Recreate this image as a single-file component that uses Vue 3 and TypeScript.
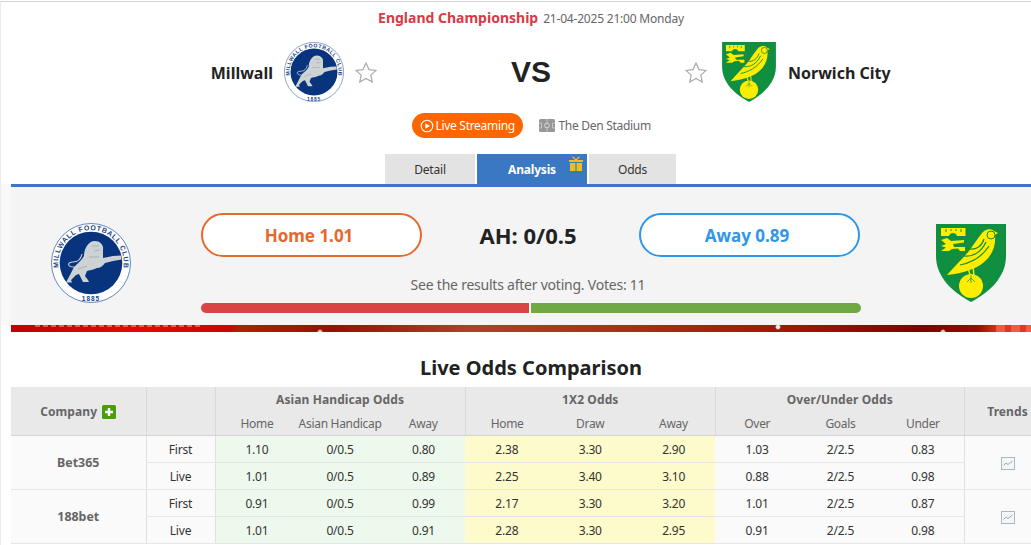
<template>
  <div class="page">
    <div class="content">
      <div class="title-line">
        <span class="league">England Championship</span>
        <span class="date">21-04-2025 21:00 Monday</span>
      </div>

      <div class="teams">
        <div class="team team-home">
          <span class="team-name">Millwall</span>
          <svg class="logo-small" viewBox="-40 -40 80 80">
            <g id="millwall">
              <circle r="39.5" fill="#fff" stroke="#3f6aa8" stroke-width="0.8" />
              <circle r="31.3" fill="#07347c" />
              <path id="arc-top" d="M-32.3,5 A32.7,32.7 0 1 1 32.3,5" fill="none" />
              <text class="crest-text"><textPath href="#arc-top" startOffset="50%" text-anchor="middle" textLength="112">MILLWALL FOOTBALL CLUB</textPath></text>
              <text class="crest-year" x="0" y="38" text-anchor="middle">1885</text>
              <path
                fill="#cdd3d5"
                d="M4,-22 C9,-22 13,-18 12,-13 C12,-9 12,-7 12,-5 L22,-7 L30,-7.5 L30.5,-3.5 L22,-2 L14,0 C12,3 9,5 6,5 C2,7 -2,7 -4,8 L-6,13 L-3,17 L-2,19 L-8,19 L-12,11 L-15,12 L-20,17 L-19,19.5 L-25,19.5 L-21,12 L-17,4 C-13,0 -9,-3 -7,-7 C-7,-14 -3,-22 4,-22 Z"
              />
              <path d="M-17,4 C-24,4 -24,-1 -18,-1 C-13,-1 -10,-4 -9,-9" fill="none" stroke="#cdd3d5" stroke-width="1.1" />
              <path d="M1,-17 L8,-17 M3,-12 L9,-13 M-2,-6 L8,-6 M-13,6 L-4,3" stroke="#98a3a9" stroke-width="0.7" fill="none" />
            </g>
          </svg>
          <svg class="star" viewBox="0 0 22 21"><polygon points="11,1 14,7.6 21,8.4 15.8,13.1 17.3,20 11,16.4 4.7,20 6.2,13.1 1,8.4 8,7.6" /></svg>
        </div>
        <div class="vs">VS</div>
        <div class="team team-away">
          <svg class="star" viewBox="0 0 22 21"><polygon points="11,1 14,7.6 21,8.4 15.8,13.1 17.3,20 11,16.4 4.7,20 6.2,13.1 1,8.4 8,7.6" /></svg>
          <svg class="logo-norwich-small" viewBox="0 0 70 78">
            <g id="norwich">
              <path fill="#0f8f3f" d="M0,0 H70 V32 C70,54 52,69 35,78 C18,69 0,54 0,32 Z" />
              <path fill="#ffed00" d="M5,4 H29.5 V12 H21 C20,8 14,8 13,12 H5 Z" />
              <path stroke="#0f8f3f" stroke-width="1" d="M10,5 V8 M15,5 V7 M20,5 V7 M25,5 V8" />
              <path fill="#ffed00" d="M5,16 L11,14 L15,17 L28,16 V18.5 L17,20 L18,23 L29,23 V27 H24 L22,24.5 L16,25 L13,27 H5 L10,23.5 L5,22 L10,20 Z" />
              <circle cx="35" cy="62" r="12" fill="#ffed00" />
              <path fill="#ffed00" d="M11,51 C20,41 27,34 33,27 C38,20 42,14 46,9 C49,5 55,4 58,7 L62,9 L59,11 C60,21 57,31 47,39 C39,45 28,49 11,51 Z" />
              <circle cx="55" cy="11" r="4" fill="none" stroke="#0f8f3f" stroke-width="1" />
              <path fill="none" stroke="#0f8f3f" stroke-width="1.2" d="M24,41 C34,39 46,33 53,22 M28,32 C36,33 45,29 50,18 M34,25 C40,26 46,22 48,15" />
              <path fill="none" stroke="#ffed00" stroke-width="1.4" d="M32,44 L35,54 M37,42 L38,52" />
              <path fill="none" stroke="#0f8f3f" stroke-width="0.7" d="M35,51 L35,59 M35,54 L31,58 M35,54 L39,58" />
            </g>
          </svg>
          <span class="team-name">Norwich City</span>
        </div>
      </div>

      <div class="info-row">
        <span class="live-btn">
          <svg class="play" viewBox="0 0 14 14">
            <circle cx="7" cy="7" r="5.8" fill="none" stroke="#fff" stroke-width="1.1" />
            <polygon points="5.4,4.2 10,7 5.4,9.8" fill="#fff" />
          </svg>
          Live Streaming
        </span>
        <span class="venue">
          <svg class="pitch" viewBox="0 0 16 13">
            <rect width="16" height="13" rx="1.5" fill="#979797" />
            <path d="M8,0 V13 M0,4 H2.5 V9 H0 M16,4 H13.5 V9 H16" fill="none" stroke="#d8d8d8" stroke-width="0.7" />
            <circle cx="8" cy="6.5" r="2.4" fill="#979797" stroke="#e8e8e8" stroke-width="0.8" />
          </svg>
          The Den Stadium
        </span>
      </div>

      <div class="tabs">
        <div class="tab tab-detail">Detail</div>
        <div class="tab tab-analysis">
          Analysis
          <svg class="gift" viewBox="0 0 14 15">
            <path fill="#f5b921" d="M1,7 H6.4 V15 H1 Z M7.6,7 H13 V15 H7.6 Z M0,4 H14 V6 H0 Z" />
            <path fill="none" stroke="#f5b921" stroke-width="1.2" d="M7,4 L3.5,0.8 M7,4 L10.5,0.8" />
          </svg>
        </div>
        <div class="tab tab-odds">Odds</div>
      </div>

      <div class="vote-panel">
        <svg class="logo-large" viewBox="-40 -40 80 80"><use href="#millwall" /></svg>
        <div class="vote-center">
          <div class="vote-buttons">
            <div class="vote-btn home">Home 1.01</div>
            <div class="handicap">AH: 0/0.5</div>
            <div class="vote-btn away">Away 0.89</div>
          </div>
          <div class="vote-note">See the results after voting. Votes: 11</div>
          <div class="vote-bar">
            <span class="bar-home"></span>
            <span class="bar-away"></span>
          </div>
        </div>
        <svg class="logo-norwich-large" viewBox="0 0 70 78"><use href="#norwich" /></svg>
      </div>
      <div class="banner-strip"></div>

      <h2 class="section-title">Live Odds Comparison</h2>

      <table class="odds-table">
        <colgroup>
          <col class="c-company" />
          <col class="c-type" />
          <col v-for="n in 9" :key="n" class="c-odd" />
          <col class="c-trend" />
        </colgroup>
        <thead>
          <tr>
            <th rowspan="2" class="company-head">
              Company
              <svg class="plus" viewBox="0 0 14 14">
                <rect width="14" height="14" rx="1.5" fill="#4b9e0b" />
                <path d="M7,3 V11 M3,7 H11" stroke="#fff" stroke-width="2.4" />
              </svg>
            </th>
            <th rowspan="2" class="company-head"></th>
            <th colspan="3">Asian Handicap Odds</th>
            <th colspan="3">1X2 Odds</th>
            <th colspan="3">Over/Under Odds</th>
            <th rowspan="2" class="company-head">Trends</th>
          </tr>
          <tr class="sub-head">
            <template v-for="(label, i) in subHeads" :key="i">
              <td :class="{ 'group-end': i % 3 === 2 }">{{ label }}</td>
            </template>
          </tr>
        </thead>
        <tbody>
          <template v-for="c in companies" :key="c.name">
            <tr v-for="(row, r) in c.rows" :key="row.type">
              <td v-if="r === 0" rowspan="2" class="company">{{ c.name }}</td>
              <td class="type">{{ row.type }}</td>
              <td v-for="(v, i) in row.odds" :key="i" :class="cellClass(i)">{{ v }}</td>
              <td v-if="r === 0" rowspan="2" class="trend">
                <svg class="trend-icon" viewBox="0 0 14 13">
                  <rect x="0.5" y="0.5" width="13" height="12" fill="#f4f7fa" stroke="#a9b6c4" />
                  <path d="M2.5,8.5 L5,6 L7,7.5 L11.5,4" fill="none" stroke="#9aa7b5" />
                </svg>
              </td>
            </tr>
          </template>
        </tbody>
      </table>
    </div>
  </div>
</template>

<script setup lang="ts">
interface OddsRow {
  type: string
  odds: string[]
}

interface Company {
  name: string
  rows: OddsRow[]
}

const subHeads = ['Home', 'Asian Handicap', 'Away', 'Home', 'Draw', 'Away', 'Over', 'Goals', 'Under']

const companies: Company[] = [
  {
    name: 'Bet365',
    rows: [
      { type: 'First', odds: ['1.10', '0/0.5', '0.80', '2.38', '3.30', '2.90', '1.03', '2/2.5', '0.83'] },
      { type: 'Live', odds: ['1.01', '0/0.5', '0.89', '2.25', '3.40', '3.10', '0.88', '2/2.5', '0.98'] },
    ],
  },
  {
    name: '188bet',
    rows: [
      { type: 'First', odds: ['0.91', '0/0.5', '0.99', '2.17', '3.30', '3.20', '1.01', '2/2.5', '0.87'] },
      { type: 'Live', odds: ['1.01', '0/0.5', '0.91', '2.28', '3.30', '2.95', '0.91', '2/2.5', '0.98'] },
    ],
  },
]

function cellClass(i: number) {
  if (i < 3) return 'asian'
  if (i < 6) return 'euro'
  return 'over'
}
</script>

<style>
html,
body {
  margin: 0;
  background: #fff;
}
</style>

<style scoped>
.page {
  width: 1031px;
  height: 544px;
  overflow: hidden;
  box-sizing: border-box;
  border-top: 1px solid #d4d4d4;
  border-left: 1px solid #ececec;
  margin-top: 1px;
  font-family: "Noto Sans", "Liberation Sans", sans-serif;
  font-size: 12px;
  letter-spacing: -0.2px;
  color: #333;
}

.crest-text {
  font-family: "Liberation Sans", sans-serif;
  font-size: 7px;
  font-weight: 700;
  letter-spacing: 0;
  fill: #1c4488;
}

.crest-year {
  font-family: "Liberation Sans", sans-serif;
  font-size: 6.5px;
  font-weight: 700;
  letter-spacing: 1px;
  fill: #1c4488;
}

.content {
  width: 1040px;
  margin-left: 10px;
}

.title-line {
  height: 29px;
  padding-top: 6px;
  box-sizing: border-box;
  display: flex;
  justify-content: center;
  align-items: baseline;
  gap: 5px;
}

.league {
  font-size: 14px;
  font-weight: 700;
  letter-spacing: 0;
  color: #d93a45;
}

.date {
  font-size: 12px;
  color: #666;
}

.teams {
  display: grid;
  grid-template-columns: 366px 308px 366px;
  align-items: center;
  height: 68px;
  margin-top: 7px;
}

.team {
  display: flex;
  align-items: center;
}

.team-home {
  justify-content: flex-end;
}

.team-name {
  font-size: 16px;
  font-weight: 700;
  letter-spacing: 0;
  color: #222;
  margin-top: 2px;
}

.logo-small {
  width: 60px;
  height: 60px;
  margin: 0 11px;
}

.logo-norwich-small {
  width: 54px;
  height: 60px;
  margin: 0 12px 0 15px;
}

.star {
  width: 22px;
  height: 21px;
  margin-top: 1px;
}

.star polygon {
  fill: #fff;
  stroke: #a9a9ad;
  stroke-width: 1.2;
}

.vs {
  text-align: center;
  font-size: 30px;
  font-weight: 700;
  letter-spacing: 0;
  color: #222;
  font-family: "Liberation Sans", sans-serif;
}

.info-row {
  display: flex;
  justify-content: center;
  align-items: center;
  gap: 16px;
  margin-top: 7px;
  height: 25px;
}

.live-btn {
  display: flex;
  align-items: center;
  gap: 2px;
  width: 111px;
  height: 25px;
  box-sizing: border-box;
  padding-left: 8px;
  background: #ff6600;
  color: #fff;
  letter-spacing: -0.3px;
  border-radius: 13px;
}

.play {
  width: 14px;
  height: 14px;
}

.venue {
  display: flex;
  align-items: center;
  gap: 4px;
  width: 112px;
  white-space: nowrap;
  letter-spacing: -0.3px;
  color: #666;
}

.pitch {
  width: 16px;
  height: 13px;
  flex: none;
}

.tabs {
  display: flex;
  justify-content: center;
  gap: 2px;
  margin-top: 16px;
  height: 30px;
  padding-right: 1px;
}

.tab {
  display: flex;
  align-items: center;
  justify-content: center;
  background: #e3e3e3;
  color: #333;
  position: relative;
}

.tab-detail {
  width: 90px;
}

.tab-analysis {
  width: 110px;
  background: #3b78c4;
  color: #fff;
  font-weight: 700;
}

.tab-odds {
  width: 87px;
}

.gift {
  position: absolute;
  right: 4px;
  top: 2px;
  width: 14px;
  height: 15px;
}

.vote-panel {
  border-top: 3px solid #3b78c4;
  height: 138px;
  background: #f4f4f4;
  box-shadow: -11px 0 0 #f8f8f8;
  display: flex;
  align-items: flex-start;
}

.logo-large {
  width: 80px;
  height: 80px;
  margin: 36px 70px 0 40px;
}

.vote-center {
  width: 660px;
  padding-top: 26px;
}

.vote-buttons {
  display: flex;
  align-items: center;
  justify-content: space-between;
  padding-right: 1px;
}

.vote-btn {
  width: 221px;
  height: 44px;
  box-sizing: border-box;
  padding-right: 5px;
  border-radius: 22px;
  background: #fff;
  border: 2px solid;
  display: flex;
  align-items: center;
  justify-content: center;
  font-size: 17px;
  font-weight: 700;
  letter-spacing: 0;
}

.vote-btn.home {
  border-color: #e5682c;
  color: #e5682c;
}

.vote-btn.away {
  border-color: #2f97e8;
  color: #2f97e8;
}

.handicap {
  font-size: 22px;
  font-weight: 700;
  letter-spacing: 0;
  color: #222;
  margin-right: 5px;
}

.vote-note {
  text-align: center;
  font-size: 14px;
  letter-spacing: -0.23px;
  color: #666;
  margin-top: 18px;
  padding-right: 6px;
}

.vote-bar {
  display: flex;
  gap: 2px;
  margin-top: 9px;
  height: 10px;
}

.bar-home {
  width: 328px;
  background: #d94545;
  border-radius: 5px 0 0 5px;
}

.bar-away {
  flex: 1;
  background: #6fa944;
  border-radius: 0 5px 5px 0;
}

.logo-norwich-large {
  width: 70px;
  height: 78px;
  margin: 37px 0 0 75px;
}

.banner-strip {
  height: 7px;
  background:
    radial-gradient(circle at 309px 7px, #e8c8b8 0, #e8c8b8 1.5px, transparent 3px),
    radial-gradient(circle at 767px 2px, #f4eeea 0, #f4eeea 1.5px, transparent 3px),
    radial-gradient(circle at 932px 7px, #e8c8b8 0, #e8c8b8 1.5px, transparent 3px),
    repeating-linear-gradient(90deg, rgba(255, 215, 195, 0.4) 0 5px, transparent 5px 8px) 24px 0 / 168px 2px no-repeat,
    repeating-linear-gradient(90deg, rgba(255, 150, 120, 0.4) 0 9px, transparent 9px 15px) 985px 0 / 55px 7px no-repeat,
    linear-gradient(90deg, #b80505 0%, #e00a0a 12%, #c60707 21%, #aa2208 22%, #980f04 31%, #b0402a 44%, #a92e18 60%, #a01406 76%, #800000 88%, #9a0c04 93%, #e23420 95%, #ea3a1e 100%);
}

.section-title {
  margin: 0;
  height: 55px;
  padding-top: 22px;
  box-sizing: border-box;
  text-align: center;
  font-size: 20px;
  line-height: 27px;
  font-weight: 700;
  letter-spacing: 0;
  color: #222;
}

.odds-table {
  width: 1040px;
  table-layout: fixed;
  border-collapse: collapse;
  text-align: center;
  color: #333;
}

.c-company {
  width: 135px;
}

.c-type {
  width: 69px;
}

.c-odd {
  width: 83.4px;
}

.c-odd:nth-child(11) {
  width: 82px;
}

.c-trend {
  width: 86.8px;
}

.odds-table th,
.odds-table td {
  padding: 1px 0 0;
  height: 25px;
  line-height: 16px;
  white-space: nowrap;
  border-bottom: 1px solid #e6e6e6;
}

.odds-table thead th,
.odds-table thead td {
  background: #e9e9e9;
  color: #666;
  border-bottom: 0;
  border-right: 1px solid #d9d9d9;
  height: 23px;
}

.odds-table thead th {
  font-size: 12px;
  letter-spacing: 0.1px;
}

.sub-head td {
  color: #8a8a8a;
  letter-spacing: -0.3px;
  border-right: 0 !important;
  border-bottom: 1px solid #d4d4d4 !important;
}

.sub-head td.group-end {
  border-right: 1px solid #d9d9d9 !important;
}

.company-head {
  border-bottom: 1px solid #d4d4d4 !important;
}

.plus {
  width: 14px;
  height: 14px;
  vertical-align: -3px;
  margin-left: 2px;
}

.company {
  background: #fafafa;
  color: #666;
  font-weight: 700;
  font-size: 12.4px;
  letter-spacing: 0;
  border-right: 1px solid #e0e0e0;
}

.type {
  background: #fafafa;
  border-right: 1px solid #e0e0e0;
}

.asian {
  background: #eef9ee;
}

.euro {
  background: #fdfbcc;
}

.over {
  background: #fafafa;
}

.odds-table td.trend {
  padding-top: 0;
  background: #fafafa;
  border-left: 1px solid #e0e0e0;
}

.trend-icon {
  width: 14px;
  height: 13px;
  vertical-align: middle;
}
</style>
